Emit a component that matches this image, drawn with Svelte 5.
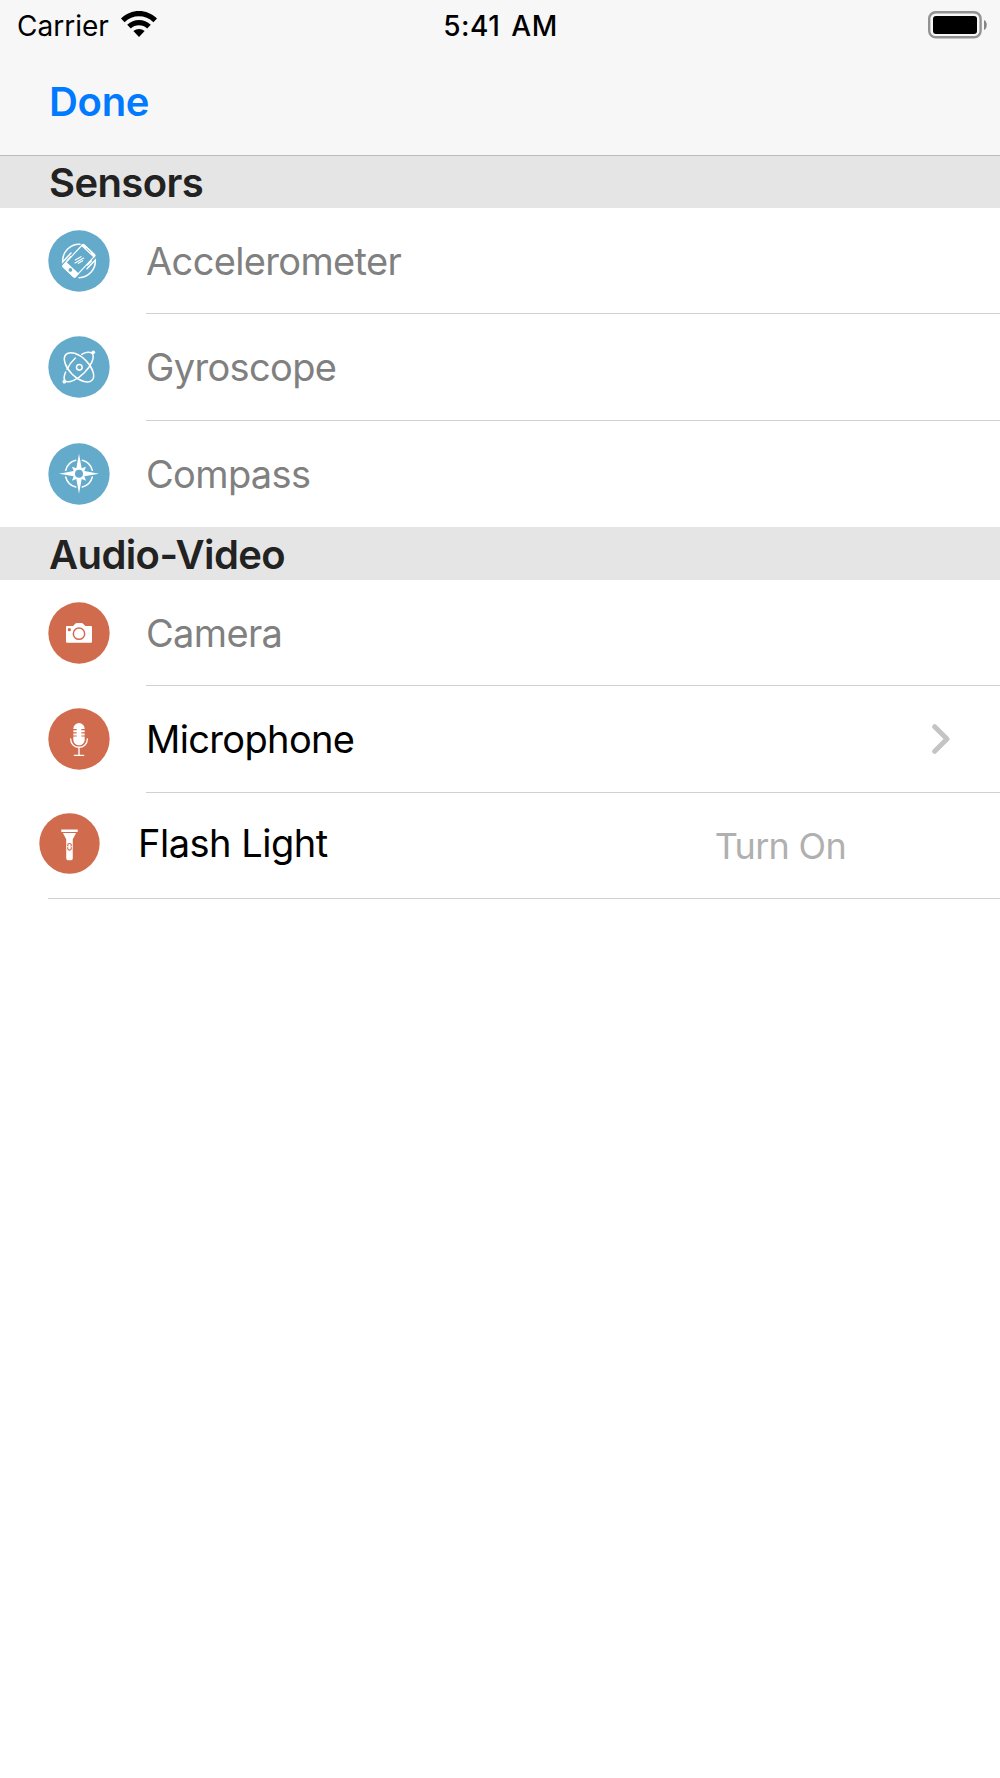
<script lang="ts">
  type Item = {
    name: string;
    icon: string;
    enabled?: boolean;
    chevron?: boolean;
    action?: string;
  };

  const sections: { title: string; tone: string; items: Item[] }[] = [
    {
      title: "Sensors",
      tone: "blue",
      items: [
        { name: "Accelerometer", icon: "accelerometer" },
        { name: "Gyroscope", icon: "gyroscope" },
        { name: "Compass", icon: "compass" }
      ]
    },
    {
      title: "Audio-Video",
      tone: "red",
      items: [
        { name: "Camera", icon: "camera" },
        { name: "Microphone", icon: "microphone", enabled: true, chevron: true },
        { name: "Flash Light", icon: "flashlight", enabled: true, action: "Turn On" }
      ]
    }
  ];
</script>

<div class="screen">
  <header>
    <div class="status-bar">
      <div class="carrier">
        <span class="carrier-name">Carrier</span>
        <svg class="wifi" viewBox="0 0 36 27" aria-hidden="true">
          <path d="M0 7.6C10-2.5 26-2.5 36 7.6L32.4 11.2C24.4 3.4 11.6 3.4 3.6 11.2Z" />
          <path d="M6.2 13.8C12.8 7.4 23.2 7.4 29.8 13.8L26.2 17.4C21.6 13.1 14.4 13.1 9.8 17.4Z" />
          <path d="M12.4 20C15.6 17.2 20.4 17.2 23.6 20L18 26Z" />
        </svg>
      </div>
      <span class="time">5:41 AM</span>
      <svg class="battery" viewBox="0 0 60 28" aria-hidden="true">
        <rect x="1.2" y="1.2" width="51.4" height="25" rx="6.5" fill="none" stroke="#929292" stroke-width="2.4" />
        <rect x="5" y="5" width="44" height="18" rx="3" />
        <path d="M56 9C59.7 10.5 59.7 17.5 56 19Z" fill="#858585" />
      </svg>
    </div>
    <div class="nav-bar">
      <button type="button" class="done">Done</button>
    </div>
  </header>

  {#each sections as section}
    <section class={section.tone}>
      <h2>{section.title}</h2>
      <ul>
        {#each section.items as item}
          <li class={item.icon} class:enabled={item.enabled}>
            <svg class="icon" viewBox="0 0 186 186" aria-hidden="true">
              <circle class="disc" cx="93" cy="93" r="92" />
              {#if item.icon === "accelerometer"}
                <g class="line" stroke-width="4.5">
                  <path d="M96 43A50 50 0 0 0 44 96L69 69M57 92L68 80" />
                  <path d="M93 143A50 50 0 0 0 142 90L117 116M130 93L118 105" />
                </g>
                <g transform="rotate(43 93 92)">
                  <rect class="disc" x="68" y="47" width="50" height="91" rx="5" stroke="#fff" stroke-width="3.5" />
                  <path class="solid" d="M66 51Q66 45 72 45H114Q120 45 120 51V55H66ZM66 121H120V134Q120 140 114 140H72Q66 140 66 134Z" />
                  <circle class="disc" cx="93" cy="130" r="5.5" />
                  <path class="mark" d="M84 50.5H102" stroke-width="2" />
                </g>
                <path class="line" d="M82 90L99 80M81 99L107 84M91 100L104 92" stroke-width="3.5" />
              {:else if item.icon === "gyroscope"}
                <g class="line" stroke-width="4.5">
                  <ellipse cx="93" cy="94" rx="55" ry="29" transform="rotate(45 93 94)" />
                  <path d="M101 55C113 48 128 46 133 53C141 64 130 89 109 110C89 130 62 143 52 135C47 130 48 119 53 108M57 100C63 87 71 76 82 66" />
                  <circle cx="94" cy="94" r="8.5" />
                </g>
                <circle class="solid" cx="136" cy="49" r="5.5" />
                <circle class="solid" cx="49" cy="137" r="5.5" />
              {:else if item.icon === "compass"}
                <path class="line" d="M103 52A42 42 0 0 1 133 82M133 102A42 42 0 0 1 103 132M83 132A42 42 0 0 1 53 102M53 82A42 42 0 0 1 83 52" stroke-width="4.5" />
                <path class="solid" d="M93 32L101 76L114 71L109 84L153 92L109 100L114 113L101 108L93 152L85 108L72 113L77 100L33 92L77 84L72 71L85 76Z" />
                <circle class="disc" cx="93" cy="92" r="12" />
              {:else if item.icon === "camera"}
                <path class="solid" d="M57 72H75L81 66Q83 63 87 63H100Q104 63 106 66L112 72H129Q132 72 132 75V119Q132 122 129 122H57Q54 122 54 119V75Q54 72 57 72Z" />
                <circle class="mark" cx="93" cy="95" r="17" stroke-width="4.5" />
                <circle class="disc" cx="64" cy="83" r="5" />
              {:else if item.icon === "microphone"}
                <rect class="solid" x="76" y="45" width="34" height="67" rx="17" />
                <path class="mark" d="M74 65H86M100 65H112M74 74.5H86M100 74.5H112M74 84H86M100 84H112" stroke-width="3.5" />
                <path class="line" d="M68 93C68 126 118 126 118 93M93 117V142M79 142H107" stroke-width="4" />
              {:else}
                <path class="solid" d="M68 50H118V58H68ZM73 61H113L103 80V138Q103 144 98 144H88Q83 144 83 138V80Z" />
                <rect class="mark" x="87.5" y="93" width="11" height="20" rx="5.5" stroke-width="3.5" />
                <path class="line" d="M85 103H88M98 103H101" stroke-width="3.5" />
              {/if}
            </svg>
            <div class="content">
              <span class="label">{item.name}</span>
              {#if item.chevron}
                <svg class="chevron" viewBox="0 0 18 30" aria-hidden="true">
                  <path d="M2.7 2.7L15 15L2.7 27.3" />
                </svg>
              {/if}
              {#if item.action}
                <span class="action">{item.action}</span>
              {/if}
            </div>
          </li>
        {/each}
      </ul>
    </section>
  {/each}
</div>

<style>
  :global(body) {
    background: #fff;
  }

  .screen {
    width: 1000px;
    min-height: 1778px;
    overflow: hidden;
    background: #fff;
    font-family: Inter, "Liberation Sans", sans-serif;
    color: #000;
  }

  /* hairline lies over the top edge of the first section title */
  header {
    position: relative;
    box-sizing: border-box;
    height: 156px;
    margin-bottom: -1px;
    background: #f7f7f7;
    border-bottom: 1px solid #b9b9b9;
  }

  .status-bar {
    display: grid;
    grid-template-columns: 1fr auto 1fr;
    align-items: center;
    box-sizing: border-box;
    height: 51px;
    padding: 1px 12px 0 17px;
    font-size: 28px;
  }

  .carrier {
    display: flex;
    align-items: center;
    gap: 12px;
  }

  .wifi {
    width: 36px;
    height: 27px;
    margin-top: -3px;
  }

  .time {
    margin-right: 4px;
    font-weight: 500;
    letter-spacing: 0.5px;
    word-spacing: 3px;
  }

  .battery {
    justify-self: end;
    width: 60px;
    height: 28px;
    margin-top: -3px;
  }

  .nav-bar {
    display: flex;
    align-items: center;
    height: 101px;
    padding-left: 49px;
  }

  .done {
    padding: 0;
    border: none;
    background: none;
    font: inherit;
    font-size: 40px;
    font-weight: 600;
    letter-spacing: -0.3px;
    color: #007aff;
  }

  h2 {
    height: 53px;
    margin: 0;
    padding-left: 49px;
    background: #e5e5e5;
    font-size: 40px;
    font-weight: 600;
    letter-spacing: -0.6px;
    line-height: 55px;
    color: #222;
  }

  ul {
    margin: 0;
    padding: 0;
    list-style: none;
  }

  li {
    display: flex;
    align-items: center;
    height: 106.33px;
    padding-left: 48px;
    color: #808080;
  }

  li.enabled {
    color: #000;
  }

  .icon {
    flex: none;
    width: 62px;
    height: 62px;
    margin-right: 36px;
    overflow: visible;
  }

  .blue {
    --tone: #64abcb;
  }

  .red {
    --tone: #d16b4e;
  }

  .disc {
    fill: var(--tone);
  }

  .solid {
    fill: #fff;
  }

  .line {
    fill: none;
    stroke: #fff;
    stroke-linecap: round;
  }

  .mark {
    fill: none;
    stroke: var(--tone);
  }

  .content {
    display: flex;
    flex: 1;
    align-items: center;
    justify-content: space-between;
    box-sizing: border-box;
    height: 100%;
    border-bottom: 1px solid #d0d0d0;
    font-size: 38px;
  }

  .label {
    letter-spacing: -0.65px;
  }

  li.compass .content {
    border-bottom: none;
  }

  .chevron {
    width: 18px;
    height: 30px;
    margin-right: 50px;
    fill: none;
    stroke: #c4c4c7;
    stroke-width: 5;
    stroke-linecap: round;
    stroke-linejoin: round;
  }

  /* the torch row is indented less and its separator runs under the icon */
  li.flashlight {
    box-sizing: border-box;
    margin-left: 48px;
    padding-left: 0;
    border-bottom: 1px solid #d0d0d0;
  }

  li.flashlight .icon {
    width: 61px;
    height: 61px;
    margin-top: -3px;
    margin-left: -9.5px;
    margin-right: 38.5px;
  }

  li.flashlight .content {
    border-bottom: none;
  }

  li.flashlight .label {
    margin-bottom: 5px;
    letter-spacing: -0.5px;
  }

  .action {
    margin-top: 1px;
    margin-right: 154px;
    font-size: 36px;
    letter-spacing: -0.7px;
    color: #b0b0b0;
  }
</style>
